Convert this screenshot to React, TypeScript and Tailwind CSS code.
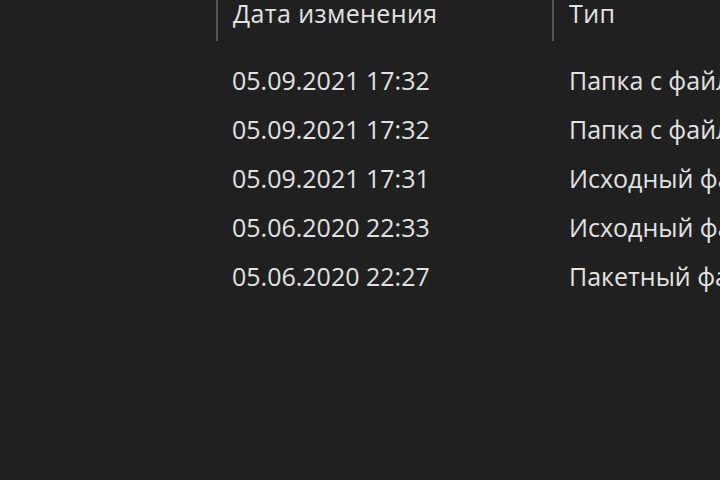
import React from 'react';

const rows = [
  { date: '05.09.2021 17:32', type: 'Папка с файлами' },
  { date: '05.09.2021 17:32', type: 'Папка с файлами' },
  { date: '05.09.2021 17:31', type: 'Исходный файл' },
  { date: '05.06.2020 22:33', type: 'Исходный файл' },
  { date: '05.06.2020 22:27', type: 'Пакетный файл' },
];

export default function App() {
  return (
    <div
      className="w-[720px] h-[480px] overflow-hidden bg-[#202020] text-[#e2e2e2] text-[25px]"
      style={{ fontFamily: '"Segoe UI", "Open Sans", sans-serif' }}
    >
      {/* header */}
      <div className="flex h-[41px] pl-[216px] whitespace-nowrap tracking-[0.4px]">
        <div className="flex w-[336px] shrink-0">
          <div className="w-[2px] bg-[#565656]" />
          <span className="pl-[15px] -mt-[4px] leading-[34px]">Дата изменения</span>
        </div>
        <div className="flex shrink-0">
          <div className="w-[2px] bg-[#565656]" />
          <span className="pl-[15px] -mt-[4px] leading-[34px]">Тип</span>
        </div>
      </div>

      {/* rows */}
      <div className="mt-[15px] pl-[216px]">
        {rows.map((r, i) => (
          <div key={i} className="flex h-[49px] items-center whitespace-nowrap">
            <div className="w-[337px] shrink-0 pl-[16px]">{r.date}</div>
            <div className="pl-[16px]">{r.type}</div>
          </div>
        ))}
      </div>
    </div>
  );
}
